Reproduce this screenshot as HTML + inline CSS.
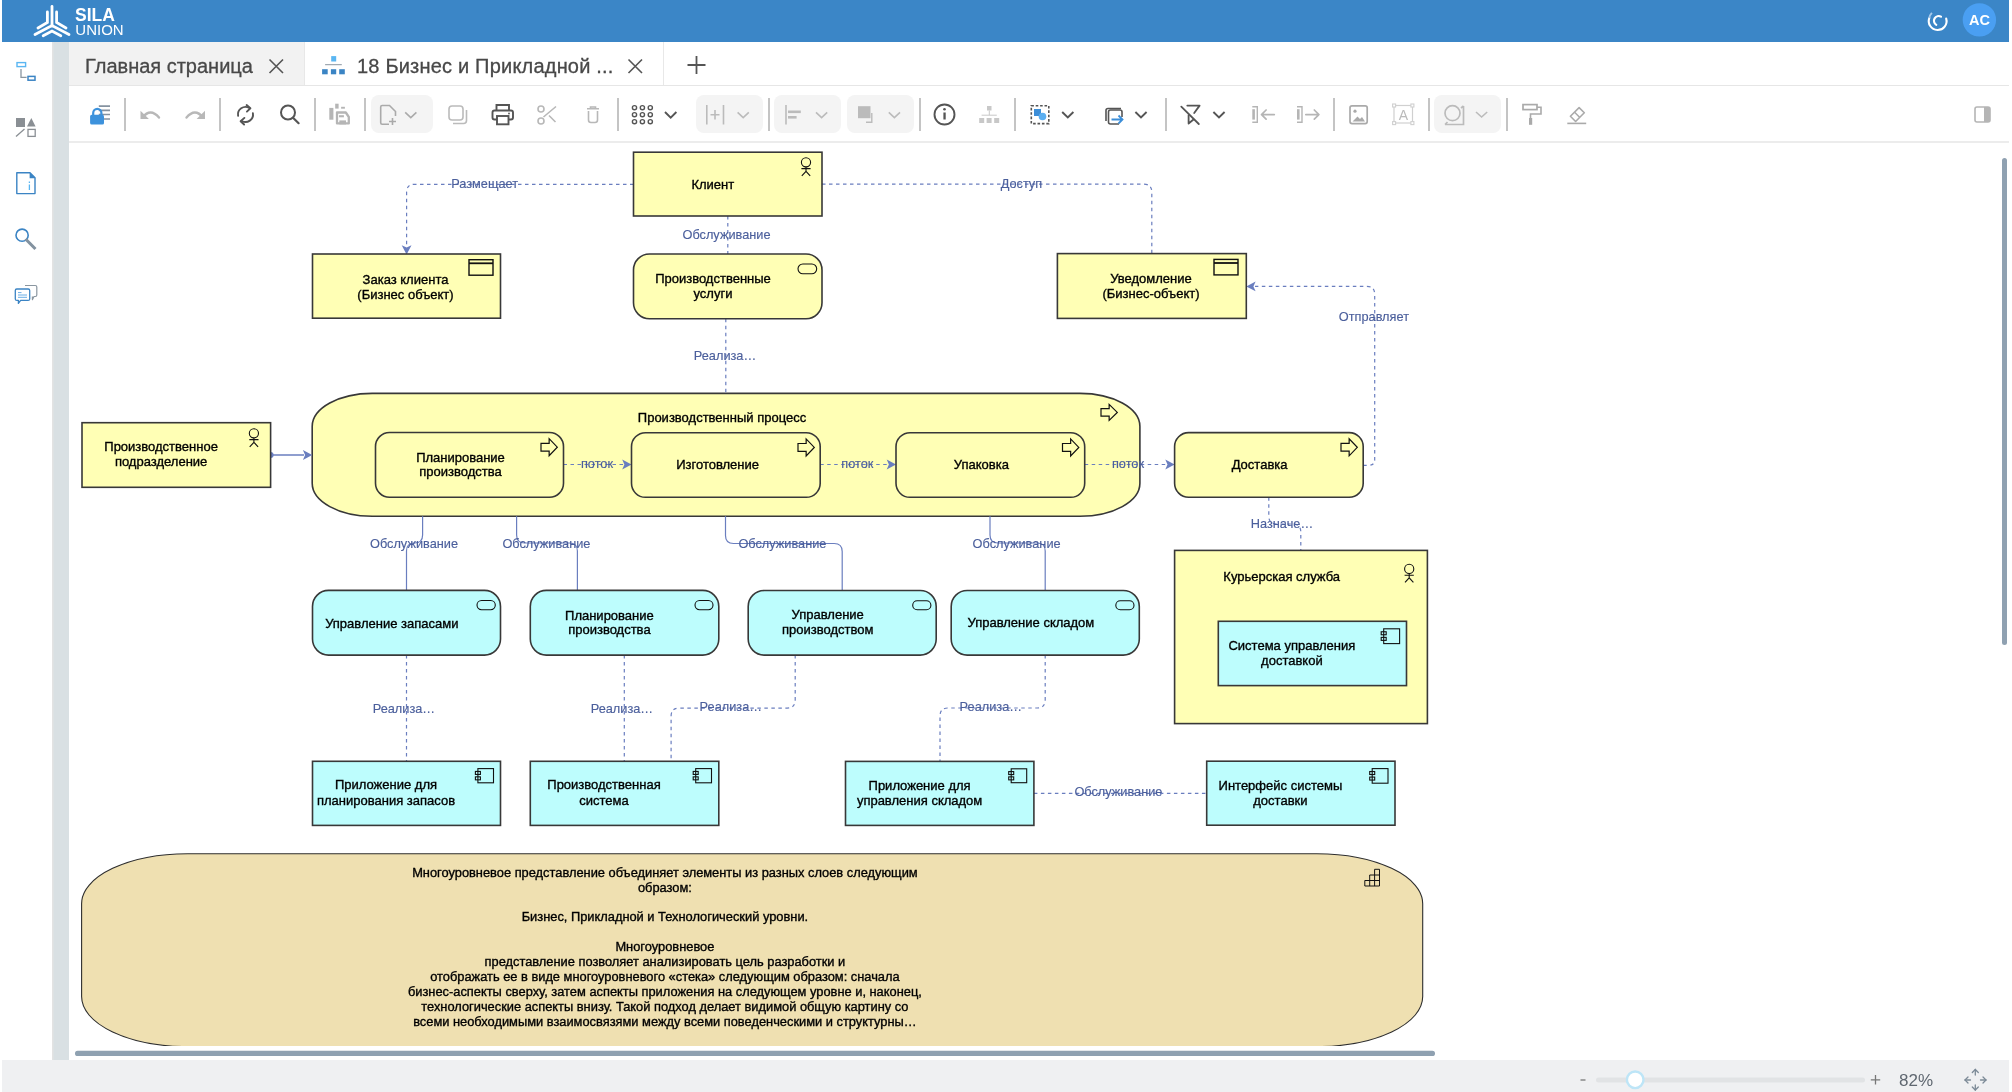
<!DOCTYPE html>
<html><head><meta charset="utf-8">
<style>
html,body{margin:0;padding:0;}
body{width:2012px;height:1092px;position:relative;overflow:hidden;background:#fff;font-family:"Liberation Sans",sans-serif;}
.a{position:absolute;}
#hdr{left:2px;top:0;width:2007px;height:42px;background:#3b86c7;}
#strip{left:52px;top:42px;width:17px;height:1018px;background:#d9e0e3;box-shadow:inset 1.5px 0 0 #e3e3e3;}
#tab1{left:69px;top:42px;width:235px;height:43px;background:#f2f2f2;}
#tabline{left:69px;top:85px;width:1940px;height:1px;background:#e6e6e6;}
#tabsep1{left:304px;top:42px;width:1px;height:43px;background:#e8e8e8;}
#tabsep2{left:663px;top:42px;width:1px;height:43px;background:#e8e8e8;}
#tbline{left:69px;top:141px;width:1940px;height:2px;background:#ececec;}
#bot{left:2px;top:1060px;width:2007px;height:32px;background:#eff0f2;}
.tabtxt{font-size:20px;color:#484848;white-space:nowrap;will-change:transform;-webkit-text-stroke:0.3px #484848;}
.sep{width:2px;height:33px;top:98px;background:#c4c4c4;}
.dd{top:95px;height:38px;background:#f4f4f4;border-radius:8px;}
svg{position:absolute;left:0;top:0;will-change:transform;}
</style></head><body>
<div class="a" id="hdr"></div>
<div class="a" id="strip"></div>
<div class="a" id="tab1"></div>
<div class="a" id="tabline"></div>
<div class="a" id="tabsep1"></div>
<div class="a" id="tabsep2"></div>
<div class="a" id="tbline"></div>
<div class="a" id="bot"></div>

<div class="a tabtxt" style="left:85px;top:55px;">Главная страница</div>
<div class="a tabtxt" style="left:357px;top:55px;letter-spacing:0.2px;">18 Бизнес и Прикладной ...</div>

<div class="a sep" style="left:124px"></div>
<div class="a sep" style="left:219px"></div>
<div class="a sep" style="left:314px"></div>
<div class="a sep" style="left:364px"></div>
<div class="a sep" style="left:617px"></div>
<div class="a sep" style="left:768px"></div>
<div class="a sep" style="left:919px"></div>
<div class="a sep" style="left:1014px"></div>
<div class="a sep" style="left:1165px"></div>
<div class="a sep" style="left:1333px"></div>
<div class="a sep" style="left:1428px"></div>
<div class="a sep" style="left:1506px"></div>
<div class="a dd" style="left:371px;width:62px"></div>
<div class="a dd" style="left:696px;width:67px"></div>
<div class="a dd" style="left:774px;width:67px"></div>
<div class="a dd" style="left:847px;width:67px"></div>
<div class="a dd" style="left:1434px;width:67px"></div>

<!-- ICONS SVG -->
<svg id="ui" width="2012" height="1092" viewBox="0 0 2012 1092">
<!-- logo -->
<g stroke="#fff" stroke-width="2.8" stroke-linecap="round" fill="none">
<path d="M52 6.5V26"/>
<path d="M47.4 12V22.5L38 28"/>
<path d="M56.6 12V22.5L66 28"/>
<path d="M35 34.6L52 25.5L69 34.6"/>
<path d="M43.2 35.8L52 31L60.8 35.8"/>
</g>
<text x="75" y="21.3" font-size="17.5" font-weight="bold" fill="#fff" font-family="Liberation Sans">SILA</text>
<text x="75.3" y="35.4" font-size="15" fill="#fff" font-family="Liberation Sans">UNION</text>
<!-- spinner -->
<path d="M1929.3 18A8.9 8.9 0 1 0 1946.2 18.6" stroke="#fff" stroke-width="2.1" fill="none" stroke-linecap="round"/>
<path d="M1931.9 12.9A8.9 8.9 0 0 0 1929.3 18" stroke="#a6c9ea" stroke-width="2" fill="none"/>
<path d="M1941 16.7A4.6 4.6 0 1 0 1936.3 24.8" stroke="#fff" stroke-width="2.1" fill="none" stroke-linecap="round"/>
<circle cx="1979.4" cy="19.9" r="16.7" fill="#4a9ff2"/>
<text x="1979.4" y="25" font-size="14.5" font-weight="bold" fill="#fff" text-anchor="middle" font-family="Liberation Sans">AC</text>
<!-- sidebar icons -->
<rect x="17" y="62.6" width="8.6" height="4" fill="none" stroke="#5ab6f2" stroke-width="1.4"/>
<path d="M21 69V77.4H26.6" fill="none" stroke="#8a96a0" stroke-width="1.3"/>
<rect x="28" y="76.4" width="7" height="3.8" fill="none" stroke="#3b84c4" stroke-width="1.5"/>
<rect x="16" y="118" width="9" height="9" fill="#8a8f94"/>
<path d="M31.3 118L35.6 126.6H27Z" fill="#8a8f94"/>
<path d="M16 136.5L24.5 129" stroke="#8a8f94" stroke-width="1.3"/>
<rect x="28" y="129.4" width="7.2" height="7" fill="none" stroke="#8a8f94" stroke-width="1.3"/>
<path d="M16.8 172.7H30L35 177.8V193.6H16.8Z" fill="none" stroke="#3b84c4" stroke-width="1.4" stroke-linejoin="round"/>
<path d="M29.6 172.2L35.6 178.2H29.6Z" fill="#3b84c4"/>
<path d="M29.4 181.6V183M29.4 184.6V190" stroke="#5ab6f2" stroke-width="1.3"/>
<circle cx="22.1" cy="235.2" r="6.1" fill="none" stroke="#3b84c4" stroke-width="1.6"/>
<path d="M26.6 240L34.4 248" stroke="#8392a0" stroke-width="3" stroke-linecap="square"/>
<path d="M25 285.5H35.3A1.5 1.5 0 0 1 36.8 287V295A1.5 1.5 0 0 1 35.3 296.5H34L32.4 299.6V296.5" fill="none" stroke="#8a96a0" stroke-width="1.2" stroke-linejoin="round"/>
<path d="M16.8 289H28.2A1.5 1.5 0 0 1 29.7 290.5V298.9A1.5 1.5 0 0 1 28.2 300.4H20.6L18.4 303.4V300.4H16.8A1.5 1.5 0 0 1 15.3 298.9V290.5A1.5 1.5 0 0 1 16.8 289Z" fill="#fff" stroke="#3b84c4" stroke-width="1.3" stroke-linejoin="round"/>
<path d="M18 292.6H21.5M18 295H27M18 297.3H27" stroke="#6aaee6" stroke-width="1"/>
<!-- tab close X -->
<path d="M269.5 59.5L283 73M283 59.5L269.5 73" stroke="#555" stroke-width="1.6"/>
<path d="M628.5 59.5L642 73M642 59.5L628.5 73" stroke="#555" stroke-width="1.6"/>
<!-- plus -->
<path d="M696.5 56V74M687.5 65H705.5" stroke="#555" stroke-width="1.8"/>
<!-- tab2 icon -->
<rect x="331.2" y="56.1" width="5" height="5.4" fill="#5ab6f2"/>
<path d="M325.1 64.7H341.8" stroke="#8a96a0" stroke-width="1"/>
<rect x="322.1" y="69.2" width="5.6" height="5.1" fill="#3b84c4"/>
<rect x="330.9" y="69.2" width="5.3" height="5.1" fill="#3b84c4"/>
<rect x="339.2" y="69.2" width="5.6" height="5.1" fill="#3b84c4"/>
<!-- toolbar -->
<path d="M98.8 106.1H110M98.8 110.3H110M98.8 114.5H110M98.8 119H110" stroke="#8592a0" stroke-width="1.7"/>
<path d="M93.2 115V113A4.1 4.1 0 0 1 101.4 113V115" fill="none" stroke="#3d92dc" stroke-width="2.2"/>
<rect x="90.1" y="114.8" width="13.9" height="9.8" rx="1.6" fill="#3d92dc"/>
<path d="M142.5 117.5Q150.5 107.5 159 117.6" fill="none" stroke="#b8b8b8" stroke-width="2.4" stroke-linecap="round"/>
<path d="M140.5 110.7V119H148.9Z" fill="#b8b8b8"/>
<path d="M203 117.5Q195 107.5 186.5 117.6" fill="none" stroke="#b8b8b8" stroke-width="2.4" stroke-linecap="round"/>
<path d="M205 110.7V119H196.6Z" fill="#b8b8b8"/>
<g fill="none" stroke="#555" stroke-width="1.9" stroke-linecap="round" stroke-linejoin="round">
<path d="M238.1 115.8A7.5 7.5 0 0 1 249.3 108"/>
<path d="M252.9 113.2A7.5 7.5 0 0 1 241.8 121"/>
<path d="M246.6 105L250.4 108.3L246.9 111.6"/>
<path d="M244.4 117.9L240.6 121.2L244.1 124.5"/>
</g>
<circle cx="288" cy="112.5" r="7" fill="none" stroke="#555" stroke-width="2"/>
<path d="M293 117.8L298.6 123.2" stroke="#555" stroke-width="2.2" stroke-linecap="round"/>
<g fill="#b5b5b5">
<rect x="329.3" y="107.9" width="4.1" height="11.8"/>
<rect x="335.2" y="103.7" width="3.4" height="4.9"/>
<rect x="341.1" y="106.8" width="3.8" height="1.9"/>
<rect x="339" y="115.2" width="4.9" height="2.1"/>
<rect x="339.3" y="120.4" width="6.7" height="4"/>
</g>
<path d="M337 112.5H345.8L348.8 117V123.4H337Z" fill="none" stroke="#b5b5b5" stroke-width="2.3" stroke-linejoin="round"/>
<path d="M389 124.3H382.2A1.5 1.5 0 0 1 380.7 122.8V107A1.5 1.5 0 0 1 382.2 105.5H389.5L395.5 111.5V116" fill="none" stroke="#aaa" stroke-width="1.6"/>
<path d="M392.5 118V125M389 121.5H396" stroke="#aaa" stroke-width="1.6"/>
<path d="M405.2 112.4L410.8 117.6L416.4 112.4" fill="none" stroke="#aaa" stroke-width="1.6"/>
<rect x="449" y="106" width="14" height="14" rx="3" fill="none" stroke="#bbb" stroke-width="1.6"/>
<path d="M466.5 110V120.5A3 3 0 0 1 463.5 123.5H453" fill="none" stroke="#bbb" stroke-width="1.6"/>
<g fill="none" stroke="#555" stroke-width="1.9">
<path d="M496.5 110.5V105H509V110.5"/>
<rect x="492.5" y="110.5" width="20.5" height="9" rx="2"/>
<rect x="497" y="116" width="11.5" height="8.3" fill="#fff"/>
</g>
<circle cx="509" cy="113.5" r="0.9" fill="#555"/>
<g fill="none" stroke="#b8b8b8" stroke-width="1.6">
<circle cx="541" cy="109" r="3"/>
<circle cx="541" cy="121" r="3"/>
<path d="M543.5 117L556 106.5M549 115.5L555.5 122"/>
</g>
<path d="M587 108.8H599M590.5 108.8V107H595.5V108.8" fill="none" stroke="#b8b8b8" stroke-width="1.6"/>
<path d="M588.5 111V120A2.5 2.5 0 0 0 591 122.5H595A2.5 2.5 0 0 0 597.5 120V111" fill="none" stroke="#b8b8b8" stroke-width="1.6"/>
<g fill="none" stroke="#555" stroke-width="1.4">
<circle cx="634.5" cy="107.7" r="2.1"/><circle cx="642.4" cy="107.7" r="2.1"/><circle cx="650.3" cy="107.7" r="2.1"/>
<circle cx="634.5" cy="114.7" r="2.1"/><circle cx="642.4" cy="114.7" r="2.1"/><circle cx="650.3" cy="114.7" r="2.1"/>
<circle cx="634.5" cy="121.7" r="2.1"/><circle cx="642.4" cy="121.7" r="2.1"/><circle cx="650.3" cy="121.7" r="2.1"/>
</g>
<path d="M665 112L670.7 117.6L676.4 112" fill="none" stroke="#555" stroke-width="1.9"/>
<path d="M706.8 105V124.5M723.5 105V124.5M710.5 114.8H719.5M715 110V119.5" fill="none" stroke="#bbb" stroke-width="1.6"/>
<path d="M737.6 112.4L743.2 117.6L748.8 112.4" fill="none" stroke="#bbb" stroke-width="1.6"/>
<path d="M786 105V124.5" stroke="#bbb" stroke-width="1.6"/>
<rect x="788" y="110.5" width="12.8" height="2.6" fill="#bbb"/>
<rect x="788" y="116" width="8.6" height="2.6" fill="#bbb"/>
<path d="M816 112.4L821.6 117.6L827.2 112.4" fill="none" stroke="#bbb" stroke-width="1.6"/>
<rect x="858" y="106.2" width="12.5" height="12" fill="#bbb"/>
<path d="M871.8 113V122.2H866" fill="none" stroke="#bbb" stroke-width="1.4"/>
<path d="M888.8 112.4L894.4 117.6L900 112.4" fill="none" stroke="#bbb" stroke-width="1.6"/>
<circle cx="944.5" cy="114.5" r="10" fill="none" stroke="#555" stroke-width="1.9"/>
<rect x="943.4" y="112.5" width="2.3" height="7" fill="#555"/>
<circle cx="944.5" cy="109.2" r="1.3" fill="#555"/>
<g fill="#c8c8c8">
<rect x="987" y="106" width="4.5" height="4.5"/>
<rect x="979.2" y="118" width="5" height="5"/><rect x="986.6" y="118" width="5" height="5"/><rect x="994.2" y="118" width="5" height="5"/>
</g>
<path d="M989.3 110.5V115.2M981.6 115.2H996.8" stroke="#c8c8c8" stroke-width="1"/>
<rect x="1031.3" y="105.8" width="17.5" height="17.8" fill="none" stroke="#555" stroke-width="1.6" stroke-dasharray="2.6 1.8"/>
<rect x="1034" y="109" width="7" height="7" fill="#3c8ed8"/>
<circle cx="1042.5" cy="116.5" r="3.8" fill="#5aaef0"/>
<path d="M1062.2 112L1067.8 117.4L1073.4 112" fill="none" stroke="#555" stroke-width="1.9"/>
<path d="M1106 121V110.5A2 2 0 0 1 1108 108.5H1121" fill="none" stroke="#555" stroke-width="1.6"/>
<path d="M1119 124H1110.5A2 2 0 0 1 1108.5 122V112A2 2 0 0 1 1110.5 110H1120A2 2 0 0 1 1122 112V117" fill="none" stroke="#555" stroke-width="1.6"/>
<path d="M1111.5 119.5H1122.5M1118.5 115.5L1122.5 119.5L1118.5 123.5" fill="none" stroke="#3c8ed8" stroke-width="1.8"/>
<path d="M1135.4 112L1141 117.4L1146.6 112" fill="none" stroke="#555" stroke-width="1.9"/>
<g fill="none" stroke="#555" stroke-width="1.8" stroke-linecap="round" stroke-linejoin="round">
<path d="M1181.3 106.6L1198.8 124"/>
<path d="M1187.3 105.6H1199.6L1194.2 113"/>
<path d="M1188.6 115.2V123.5L1193.2 119.8"/>
</g>
<path d="M1213.4 112L1219 117.4L1224.6 112" fill="none" stroke="#555" stroke-width="1.9"/>
<g fill="none" stroke="#b5b5b5" stroke-width="1.4">
<path d="M1252.3 106.8H1257.3V122.2H1252.3"/>
<path d="M1297 106.8H1302V122.2H1297"/>
</g>
<rect x="1252.3" y="109.2" width="2.6" height="10.4" fill="#b5b5b5"/>
<rect x="1297" y="109.2" width="2.6" height="10.4" fill="#b5b5b5"/>
<g fill="none" stroke="#b5b5b5" stroke-width="1.7" stroke-linecap="round" stroke-linejoin="round">
<path d="M1274.3 114.6H1261.5M1266.1 110L1261.5 114.6L1266.1 119.2"/>
<path d="M1305.8 114.6H1318.9M1314.3 110L1318.9 114.6L1314.3 119.2"/>
</g>
<rect x="1350" y="105.8" width="17.2" height="17.8" rx="2" fill="none" stroke="#aaa" stroke-width="1.7"/>
<circle cx="1355" cy="111.2" r="1.6" fill="#aaa"/>
<path d="M1352.5 121.5L1357.5 116.5L1360 119L1362 117L1365 121.5Z" fill="#aaa"/>
<rect x="1394" y="105.5" width="18.5" height="17.5" fill="none" stroke="#d0d0d0" stroke-width="1.2"/>
<g fill="#fff" stroke="#d0d0d0" stroke-width="1.1">
<rect x="1392.6" y="104" width="3" height="3"/><rect x="1410.9" y="104" width="3" height="3"/>
<rect x="1392.6" y="121.6" width="3" height="3"/><rect x="1410.9" y="121.6" width="3" height="3"/>
</g>
<text x="1403.3" y="120" font-size="14" fill="#bbb" text-anchor="middle" font-family="Liberation Sans">A</text>
<circle cx="1452.5" cy="113.2" r="7.5" fill="none" stroke="#bbb" stroke-width="1.7"/>
<path d="M1463.5 106V124.5H1445M1463.5 106L1461 108M1445 124.5L1447.5 122" fill="none" stroke="#bbb" stroke-width="1.7"/>
<path d="M1476 112L1481.6 117L1487.2 112" fill="none" stroke="#bbb" stroke-width="1.6"/>
<rect x="1523" y="104.6" width="14" height="5" fill="none" stroke="#aaa" stroke-width="1.7"/>
<path d="M1537 107.2H1541V114H1530.5V118" fill="none" stroke="#aaa" stroke-width="1.6"/>
<rect x="1529" y="118" width="3.2" height="6.8" fill="#aaa"/>
<path d="M1579.1 107.6L1584.3 112.8L1575.6 121.5L1570.4 116.3Z" fill="none" stroke="#aaa" stroke-width="1.6" stroke-linejoin="round"/><path d="M1574.6 112.2L1579.6 117.2" stroke="#aaa" stroke-width="1.5"/><path d="M1567.3 123.4H1586.2" stroke="#aaa" stroke-width="1.6"/>
<rect x="1975" y="107" width="15" height="15" rx="2" fill="none" stroke="#b5b5b5" stroke-width="1.6"/>
<rect x="1984" y="107" width="6" height="15" fill="#b5b5b5"/>
<!-- bottom bar -->
<path d="M1580.5 1080H1585.5" stroke="#777" stroke-width="1.3"/>
<rect x="1596" y="1077.5" width="269" height="5" rx="2.5" fill="#e1e3e5"/>
<circle cx="1635.2" cy="1079.8" r="8.3" fill="#fff" stroke="#bde5f7" stroke-width="2.4"/>
<path d="M1875.5 1075V1084.5M1870.8 1079.8H1880.2" stroke="#777" stroke-width="1.3"/>
<text x="1899" y="1086" font-size="17" fill="#5f6770" font-family="Liberation Sans">82%</text>
<g fill="none" stroke="#7c8a97" stroke-width="1.3" stroke-linecap="round">
<path d="M1975.3 1069.5V1075M1975.3 1085V1090M1965 1080H1970.5M1980.5 1080H1986"/>
<path d="M1972.3 1072.5L1975.3 1069.5L1978.3 1072.5M1972.3 1087L1975.3 1090L1978.3 1087M1968 1077L1965 1080L1968 1083M1983 1077L1986 1080L1983 1083"/>
</g>
<!-- scrollbars -->
<rect x="2002" y="158" width="5" height="487" rx="2.5" fill="#8fa1b1"/>
<rect x="75" y="1050.7" width="1360" height="5.3" rx="2.6" fill="#8fa1b1"/>
</svg>

<!-- DIAGRAM SVG -->
<svg id="dg" width="2012" height="1092" viewBox="0 0 2012 1092">
<defs><clipPath id="cv"><rect x="69" y="143" width="1940" height="902.9"/></clipPath></defs>
<g clip-path="url(#cv)" font-family="Liberation Sans">
<path d="M187.6 853.7H1316.7A106 50 0 0 1 1422.7 903.7V996.6A106 50 0 0 1 1316.7 1046.6H187.6A106 50 0 0 1 81.6 996.6V903.7A106 50 0 0 1 187.6 853.7Z" fill="#efe0b1" stroke="#2e2e2e" stroke-width="1.1"/>
<path d="M372.2 393.4H1079.9A60 33 0 0 1 1139.9 426.4V483.3A60 33 0 0 1 1079.9 516.3H372.2A60 33 0 0 1 312.2 483.3V426.4A60 33 0 0 1 372.2 393.4Z" fill="#ffffb5" stroke="#383838" stroke-width="1.6"/>
<path d="M633.5 184.3L414.60 184.30Q406.6 184.3 406.60 192.30L406.6 245" fill="none" stroke="#6a7ebf" stroke-width="1.2" stroke-dasharray="3.5 3.5"/>
<path d="M406.6 254.5L401.70000000000005 245.2L406.6 247.39999999999998L411.5 245.2Z" fill="#6a7ebf"/>
<path d="M822 184.2L1143.80 184.20Q1151.8 184.2 1151.80 192.20L1151.8 253.6" fill="none" stroke="#6a7ebf" stroke-width="1.2" stroke-dasharray="3.5 3.5"/>
<path d="M727.8 216V254" fill="none" stroke="#6a7ebf" stroke-width="1.2" stroke-dasharray="3.5 3.5"/>
<path d="M725.8 318.8V393.4" fill="none" stroke="#6a7ebf" stroke-width="1.2" stroke-dasharray="3.5 3.5"/>
<path d="M270.6 455H304" fill="none" stroke="#6a7ebf" stroke-width="1.3"/>
<path d="M312.2 455L302.9 450.1L305.09999999999997 455L302.9 459.9Z" fill="#6a7ebf"/>
<path d="M270.6 452A3 3 0 0 1 270.6 458Z" fill="#6a7ebf"/>
<path d="M563.5 464.5H624" fill="none" stroke="#6a7ebf" stroke-width="1.2" stroke-dasharray="3.5 3.5"/>
<path d="M631.5 464.5L622.2 459.6L624.4000000000001 464.5L622.2 469.4Z" fill="#6a7ebf"/>
<path d="M820.2 464.5H888" fill="none" stroke="#6a7ebf" stroke-width="1.2" stroke-dasharray="3.5 3.5"/>
<path d="M896 464.5L886.7 459.6L888.9000000000001 464.5L886.7 469.4Z" fill="#6a7ebf"/>
<path d="M1084.7 464.5H1166" fill="none" stroke="#6a7ebf" stroke-width="1.2" stroke-dasharray="3.5 3.5"/>
<path d="M1174.6 464.5L1165.3 459.6L1167.5 464.5L1165.3 469.4Z" fill="#6a7ebf"/>
<path d="M1363.2 465.3L1368.95 465.30Q1374.7 465.3 1374.70 459.55L1374.70 294.40Q1374.7 286.4 1366.70 286.40L1255 286.4" fill="none" stroke="#6a7ebf" stroke-width="1.2" stroke-dasharray="3.5 3.5"/>
<path d="M1246.3 286.4L1255.6 281.5L1253.3999999999999 286.4L1255.6 291.29999999999995Z" fill="#6a7ebf"/>
<path d="M1268.8 497.2L1268.80 516.00Q1268.8 524 1276.80 524.00L1292.80 524.00Q1300.8 524 1300.80 532.00L1300.8 550.4" fill="none" stroke="#6a7ebf" stroke-width="1.2" stroke-dasharray="3.5 3.5"/>
<path d="M422.6 516.3L422.60 535.00Q422.6 543 414.60 543.00L414.50 543.00Q406.5 543 406.50 551.00L406.5 590.4" fill="none" stroke="#6a7ebf" stroke-width="1.2"/>
<path d="M516.6 516.3L516.60 535.00Q516.6 543 524.60 543.00L569.40 543.00Q577.4 543 577.40 551.00L577.4 590.4" fill="none" stroke="#6a7ebf" stroke-width="1.2"/>
<path d="M725.5 516.3L725.50 535.50Q725.5 543.5 733.50 543.50L834.20 543.50Q842.2 543.5 842.20 551.50L842.2 590.5" fill="none" stroke="#6a7ebf" stroke-width="1.2"/>
<path d="M990 516.3L990.00 535.00Q990 543 998.00 543.00L1037.20 543.00Q1045.2 543 1045.20 551.00L1045.2 590.5" fill="none" stroke="#6a7ebf" stroke-width="1.2"/>
<path d="M406.5 655.1V761.3" fill="none" stroke="#6a7ebf" stroke-width="1.2" stroke-dasharray="3.5 3.5"/>
<path d="M624.3 655.1V761.3" fill="none" stroke="#6a7ebf" stroke-width="1.2" stroke-dasharray="3.5 3.5"/>
<path d="M795.2 655.1L795.20 700.10Q795.2 708.1 787.20 708.10L679.10 708.10Q671.1 708.1 671.10 716.10L671.1 761.3" fill="none" stroke="#6a7ebf" stroke-width="1.2" stroke-dasharray="3.5 3.5"/>
<path d="M1045.2 655.1L1045.20 700.00Q1045.2 708 1037.20 708.00L948.00 708.00Q940 708 940.00 716.00L940 761.4" fill="none" stroke="#6a7ebf" stroke-width="1.2" stroke-dasharray="3.5 3.5"/>
<path d="M1033.9 793.4H1206.7" fill="none" stroke="#6a7ebf" stroke-width="1.2" stroke-dasharray="3.5 3.5"/>
<path d="M1101 408.71999999999997H1109.15V404.4L1117.3 412.4L1109.15 420.4V416.08H1101Z" fill="none" stroke="#111" stroke-width="1.2" stroke-linejoin="miter"/>
<text x="722" y="422" fill="#000" stroke="#000" stroke-width="0.35" font-size="13" text-anchor="middle">Производственный процесс</text>
<rect x="633.5" y="152.2" width="188.50" height="63.80" fill="#ffffb5" stroke="#383838" stroke-width="1.6"/>
<g fill="none" stroke="#111" stroke-width="1.1"><circle cx="806" cy="162.3" r="4.6"/><path d="M806 166.9V171.5M801.4 168.60000000000002H810.6M801.8 175.8L806 171.3L810.2 175.8"/></g>
<text x="712.8" y="188.7" fill="#000" stroke="#000" stroke-width="0.35" font-size="13" text-anchor="middle">Клиент</text>
<rect x="312.5" y="254" width="188.00" height="64.20" fill="#ffffb5" stroke="#383838" stroke-width="1.6"/>
<g fill="none" stroke="#111"><rect x="469" y="259.7" width="24" height="15.5" stroke-width="1.4"/><path d="M469 263.3H493" stroke-width="1.8"/></g>
<text x="405.5" y="283.7" fill="#000" stroke="#000" stroke-width="0.35" font-size="13" text-anchor="middle">Заказ клиента</text>
<text x="405.5" y="298.5" fill="#000" stroke="#000" stroke-width="0.35" font-size="13" text-anchor="middle">(Бизнес объект)</text>
<rect x="633.5" y="254" width="188.50" height="64.80" rx="16" ry="16" fill="#ffffb5" stroke="#383838" stroke-width="1.6"/>
<rect x="798" y="264" width="18.700000000000045" height="9.699999999999989" rx="4.849999999999994" fill="none" stroke="#111" stroke-width="1.1"/>
<text x="713" y="283" fill="#000" stroke="#000" stroke-width="0.35" font-size="13" text-anchor="middle">Производственные</text>
<text x="713" y="297.5" fill="#000" stroke="#000" stroke-width="0.35" font-size="13" text-anchor="middle">услуги</text>
<rect x="1057.4" y="253.6" width="188.90" height="64.80" fill="#ffffb5" stroke="#383838" stroke-width="1.6"/>
<g fill="none" stroke="#111"><rect x="1214" y="259.4" width="24" height="15.5" stroke-width="1.4"/><path d="M1214 263.0H1238" stroke-width="1.8"/></g>
<text x="1151" y="283.1" fill="#000" stroke="#000" stroke-width="0.35" font-size="13" text-anchor="middle">Уведомление</text>
<text x="1151" y="297.8" fill="#000" stroke="#000" stroke-width="0.35" font-size="13" text-anchor="middle">(Бизнес-объект)</text>
<rect x="82" y="422.7" width="188.60" height="64.60" fill="#ffffb5" stroke="#383838" stroke-width="1.6"/>
<g fill="none" stroke="#111" stroke-width="1.1"><circle cx="253.9" cy="433.3" r="4.6"/><path d="M253.9 437.90000000000003V442.5M249.3 439.6H258.5M249.70000000000002 446.8L253.9 442.3L258.1 446.8"/></g>
<text x="161.1" y="451.1" fill="#000" stroke="#000" stroke-width="0.35" font-size="13" text-anchor="middle">Производственное</text>
<text x="161.1" y="465.6" fill="#000" stroke="#000" stroke-width="0.35" font-size="13" text-anchor="middle">подразделение</text>
<rect x="375.5" y="432.5" width="188.00" height="64.70" rx="14" ry="14" fill="#ffffb5" stroke="#383838" stroke-width="1.6"/>
<path d="M541 443.28999999999996H549.15V438.7L557.3 447.2L549.15 455.7V451.11H541Z" fill="none" stroke="#111" stroke-width="1.2" stroke-linejoin="miter"/>
<text x="460.5" y="461.8" fill="#000" stroke="#000" stroke-width="0.35" font-size="13" text-anchor="middle">Планирование</text>
<text x="460.5" y="476.3" fill="#000" stroke="#000" stroke-width="0.35" font-size="13" text-anchor="middle">производства</text>
<rect x="631.5" y="432.7" width="188.70" height="64.60" rx="14" ry="14" fill="#ffffb5" stroke="#383838" stroke-width="1.6"/>
<path d="M798 443.48999999999995H806.15V438.9L814.3 447.4L806.15 455.9V451.31H798Z" fill="none" stroke="#111" stroke-width="1.2" stroke-linejoin="miter"/>
<text x="717.6" y="468.7" fill="#000" stroke="#000" stroke-width="0.35" font-size="13" text-anchor="middle">Изготовление</text>
<rect x="896" y="432.7" width="188.70" height="64.60" rx="14" ry="14" fill="#ffffb5" stroke="#383838" stroke-width="1.6"/>
<path d="M1062.5 443.48999999999995H1070.65V438.9L1078.8 447.4L1070.65 455.9V451.31H1062.5Z" fill="none" stroke="#111" stroke-width="1.2" stroke-linejoin="miter"/>
<text x="981.4" y="468.7" fill="#000" stroke="#000" stroke-width="0.35" font-size="13" text-anchor="middle">Упаковка</text>
<rect x="1174.6" y="432.6" width="188.60" height="64.60" rx="14" ry="14" fill="#ffffb5" stroke="#383838" stroke-width="1.6"/>
<path d="M1341 443.39H1349.15V438.8L1357.3 447.3L1349.15 455.8V451.21000000000004H1341Z" fill="none" stroke="#111" stroke-width="1.2" stroke-linejoin="miter"/>
<text x="1259.6" y="469.3" fill="#000" stroke="#000" stroke-width="0.35" font-size="13" text-anchor="middle">Доставка</text>
<rect x="1174.6" y="550.4" width="252.80" height="173.20" fill="#ffffb5" stroke="#383838" stroke-width="1.6"/>
<g fill="none" stroke="#111" stroke-width="1.1"><circle cx="1409.2" cy="568.9" r="4.6"/><path d="M1409.2 573.5V578.1M1404.6000000000001 575.1999999999999H1413.8M1405.0 582.4L1409.2 577.9L1413.4 582.4"/></g>
<text x="1281.7" y="580.7" fill="#000" stroke="#000" stroke-width="0.35" font-size="13" text-anchor="middle">Курьерская служба</text>
<rect x="1218.3" y="621.3" width="188.20" height="64.30" fill="#bdfdfd" stroke="#383838" stroke-width="1.6"/>
<g fill="none" stroke="#111" stroke-width="1.1"><rect x="1383.7" y="628.8" width="15.899999999999864" height="14.800000000000068"/><rect x="1381.2" y="631.76" width="5" height="3"/><rect x="1381.2" y="637.384" width="5" height="3"/></g>
<text x="1291.9" y="650" fill="#000" stroke="#000" stroke-width="0.35" font-size="13" text-anchor="middle">Система управления</text>
<text x="1291.9" y="665" fill="#000" stroke="#000" stroke-width="0.35" font-size="13" text-anchor="middle">доставкой</text>
<rect x="312.5" y="590.4" width="188.00" height="64.70" rx="16" ry="16" fill="#bdfdfd" stroke="#383838" stroke-width="1.6"/>
<rect x="477" y="600.5" width="18.30000000000001" height="9.200000000000045" rx="4.600000000000023" fill="none" stroke="#111" stroke-width="1.1"/>
<text x="391.8" y="627.6" fill="#000" stroke="#000" stroke-width="0.35" font-size="13" text-anchor="middle">Управление запасами</text>
<rect x="530.3" y="590.4" width="188.50" height="64.70" rx="16" ry="16" fill="#bdfdfd" stroke="#383838" stroke-width="1.6"/>
<rect x="695" y="600.5" width="18" height="9.200000000000045" rx="4.600000000000023" fill="none" stroke="#111" stroke-width="1.1"/>
<text x="609.4" y="619.5" fill="#000" stroke="#000" stroke-width="0.35" font-size="13" text-anchor="middle">Планирование</text>
<text x="609.4" y="633.7" fill="#000" stroke="#000" stroke-width="0.35" font-size="13" text-anchor="middle">производства</text>
<rect x="748.2" y="590.5" width="188.00" height="64.60" rx="16" ry="16" fill="#bdfdfd" stroke="#383838" stroke-width="1.6"/>
<rect x="912.7" y="600.8" width="18.199999999999932" height="9.0" rx="4.5" fill="none" stroke="#111" stroke-width="1.1"/>
<text x="827.7" y="619.4" fill="#000" stroke="#000" stroke-width="0.35" font-size="13" text-anchor="middle">Управление</text>
<text x="827.7" y="634.3" fill="#000" stroke="#000" stroke-width="0.35" font-size="13" text-anchor="middle">производством</text>
<rect x="951.2" y="590.5" width="188.10" height="64.60" rx="16" ry="16" fill="#bdfdfd" stroke="#383838" stroke-width="1.6"/>
<rect x="1115.8" y="600.8" width="18.200000000000045" height="9.0" rx="4.5" fill="none" stroke="#111" stroke-width="1.1"/>
<text x="1030.9" y="626.9" fill="#000" stroke="#000" stroke-width="0.35" font-size="13" text-anchor="middle">Управление складом</text>
<rect x="312.5" y="761.3" width="188.00" height="64.10" fill="#bdfdfd" stroke="#383838" stroke-width="1.6"/>
<g fill="none" stroke="#111" stroke-width="1.1"><rect x="477.9" y="768.6" width="15.600000000000023" height="14.199999999999932"/><rect x="475.4" y="771.44" width="5" height="3"/><rect x="475.4" y="776.836" width="5" height="3"/></g>
<text x="386" y="789.3" fill="#000" stroke="#000" stroke-width="0.35" font-size="13" text-anchor="middle">Приложение для</text>
<text x="386" y="805" fill="#000" stroke="#000" stroke-width="0.35" font-size="13" text-anchor="middle">планирования запасов</text>
<rect x="530.3" y="761.3" width="188.50" height="64.10" fill="#bdfdfd" stroke="#383838" stroke-width="1.6"/>
<g fill="none" stroke="#111" stroke-width="1.1"><rect x="695.7" y="768.6" width="15.799999999999955" height="14.199999999999932"/><rect x="693.2" y="771.44" width="5" height="3"/><rect x="693.2" y="776.836" width="5" height="3"/></g>
<text x="604" y="789.3" fill="#000" stroke="#000" stroke-width="0.35" font-size="13" text-anchor="middle">Производственная</text>
<text x="604" y="805" fill="#000" stroke="#000" stroke-width="0.35" font-size="13" text-anchor="middle">система</text>
<rect x="845.5" y="761.4" width="188.40" height="64.00" fill="#bdfdfd" stroke="#383838" stroke-width="1.6"/>
<g fill="none" stroke="#111" stroke-width="1.1"><rect x="1011.2" y="768.8" width="15.5" height="13.900000000000091"/><rect x="1008.7" y="771.5799999999999" width="5" height="3"/><rect x="1008.7" y="776.862" width="5" height="3"/></g>
<text x="919.6" y="790.1" fill="#000" stroke="#000" stroke-width="0.35" font-size="13" text-anchor="middle">Приложение для</text>
<text x="919.6" y="805" fill="#000" stroke="#000" stroke-width="0.35" font-size="13" text-anchor="middle">управления складом</text>
<rect x="1206.7" y="761.2" width="188.30" height="64.00" fill="#bdfdfd" stroke="#383838" stroke-width="1.6"/>
<g fill="none" stroke="#111" stroke-width="1.1"><rect x="1372.2" y="768.6" width="15.799999999999955" height="14.600000000000023"/><rect x="1369.7" y="771.52" width="5" height="3"/><rect x="1369.7" y="777.068" width="5" height="3"/></g>
<text x="1280.4" y="790" fill="#000" stroke="#000" stroke-width="0.35" font-size="13" text-anchor="middle">Интерфейс системы</text>
<text x="1280.4" y="805.2" fill="#000" stroke="#000" stroke-width="0.35" font-size="13" text-anchor="middle">доставки</text>
<g fill="none" stroke="#111" stroke-width="1"><path d="M1364.8 886H1379.5V869.3H1374.6V886M1364.8 886V880.5H1379.5M1369.7 886V875H1379.5"/></g>
<text x="664.9" y="876.6" fill="#000" stroke="#000" stroke-width="0.35" font-size="12.85" text-anchor="middle">Многоуровневое представление объединяет элементы из разных слоев следующим</text>
<text x="664.9" y="891.5" fill="#000" stroke="#000" stroke-width="0.35" font-size="12.85" text-anchor="middle">образом:</text>
<text x="664.9" y="921.3" fill="#000" stroke="#000" stroke-width="0.35" font-size="12.85" text-anchor="middle">Бизнес, Прикладной и Технологический уровни.</text>
<text x="664.9" y="951.1" fill="#000" stroke="#000" stroke-width="0.35" font-size="12.85" text-anchor="middle">Многоуровневое</text>
<text x="664.9" y="966" fill="#000" stroke="#000" stroke-width="0.35" font-size="12.85" text-anchor="middle">представление позволяет анализировать цель разработки и</text>
<text x="664.9" y="980.9" fill="#000" stroke="#000" stroke-width="0.35" font-size="12.85" text-anchor="middle">отображать ее в виде многоуровневого «стека» следующим образом: сначала</text>
<text x="664.9" y="995.8" fill="#000" stroke="#000" stroke-width="0.35" font-size="12.85" text-anchor="middle">бизнес-аспекты сверху, затем аспекты приложения на следующем уровне и, наконец,</text>
<text x="664.9" y="1010.7" fill="#000" stroke="#000" stroke-width="0.35" font-size="12.85" text-anchor="middle">технологические аспекты внизу. Такой подход делает видимой общую картину со</text>
<text x="664.9" y="1025.6" fill="#000" stroke="#000" stroke-width="0.35" font-size="12.85" text-anchor="middle">всеми необходимыми взаимосвязями между всеми поведенческими и структурны…</text>
<text x="484.6" y="187.8" fill="#4b5f9c" stroke="#4b5f9c" stroke-width="0.15" font-size="12.75" text-anchor="middle">Размещает</text>
<text x="1021.4" y="187.7" fill="#4b5f9c" stroke="#4b5f9c" stroke-width="0.15" font-size="12.75" text-anchor="middle">Доступ</text>
<text x="726.5" y="238.9" fill="#4b5f9c" stroke="#4b5f9c" stroke-width="0.15" font-size="12.75" text-anchor="middle">Обслуживание</text>
<text x="725" y="360.1" fill="#4b5f9c" stroke="#4b5f9c" stroke-width="0.15" font-size="12.75" text-anchor="middle">Реализа…</text>
<text x="597" y="467.7" fill="#4b5f9c" stroke="#4b5f9c" stroke-width="0.15" font-size="12.75" text-anchor="middle">поток</text>
<text x="857.3" y="467.7" fill="#4b5f9c" stroke="#4b5f9c" stroke-width="0.15" font-size="12.75" text-anchor="middle">поток</text>
<text x="1128" y="467.7" fill="#4b5f9c" stroke="#4b5f9c" stroke-width="0.15" font-size="12.75" text-anchor="middle">поток</text>
<text x="1373.9" y="320.5" fill="#4b5f9c" stroke="#4b5f9c" stroke-width="0.15" font-size="12.75" text-anchor="middle">Отправляет</text>
<text x="1282" y="528.3" fill="#4b5f9c" stroke="#4b5f9c" stroke-width="0.15" font-size="12.75" text-anchor="middle">Назначе…</text>
<text x="414" y="548" fill="#4b5f9c" stroke="#4b5f9c" stroke-width="0.15" font-size="12.75" text-anchor="middle">Обслуживание</text>
<text x="546.4" y="548" fill="#4b5f9c" stroke="#4b5f9c" stroke-width="0.15" font-size="12.75" text-anchor="middle">Обслуживание</text>
<text x="782.4" y="548" fill="#4b5f9c" stroke="#4b5f9c" stroke-width="0.15" font-size="12.75" text-anchor="middle">Обслуживание</text>
<text x="1016.6" y="548" fill="#4b5f9c" stroke="#4b5f9c" stroke-width="0.15" font-size="12.75" text-anchor="middle">Обслуживание</text>
<text x="403.9" y="712.8" fill="#4b5f9c" stroke="#4b5f9c" stroke-width="0.15" font-size="12.75" text-anchor="middle">Реализа…</text>
<text x="621.9" y="712.8" fill="#4b5f9c" stroke="#4b5f9c" stroke-width="0.15" font-size="12.75" text-anchor="middle">Реализа…</text>
<text x="730.8" y="710.8" fill="#4b5f9c" stroke="#4b5f9c" stroke-width="0.15" font-size="12.75" text-anchor="middle">Реализа…</text>
<text x="990.8" y="710.7" fill="#4b5f9c" stroke="#4b5f9c" stroke-width="0.15" font-size="12.75" text-anchor="middle">Реализа…</text>
<text x="1118.4" y="796.3" fill="#4b5f9c" stroke="#4b5f9c" stroke-width="0.15" font-size="12.75" text-anchor="middle">Обслуживание</text>
</g>
</svg>
</body></html>
